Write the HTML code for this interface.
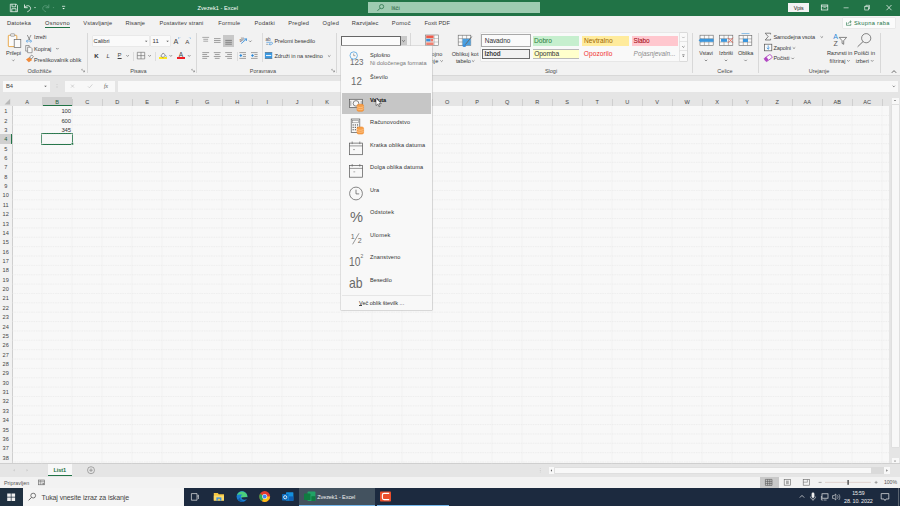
<!DOCTYPE html>
<html lang="sl"><head><meta charset="utf-8"><title>Zvezek1 - Excel</title>
<style>
html,body{margin:0;padding:0;}
body{width:900px;height:506px;overflow:hidden;position:relative;background:#f2f2f2;font-family:"Liberation Sans",sans-serif;}
.a{position:absolute;box-sizing:content-box;}
.t{white-space:nowrap;}
svg{position:absolute;left:0;top:0;}
</style></head><body>
<div class="a" style="left:0.00px;top:0.00px;width:900.00px;height:15.60px;background:#217346;"></div>
<div class="a" style="left:367.60px;top:2.20px;width:172.40px;height:11.20px;background:#9ecbb1;"></div>
<div class="a t" style="left:197.50px;top:5px;font-size:5.60px;line-height:6px;color:#fff;letter-spacing:0.044px;">Zvezek1 - Excel</div>
<div class="a t" style="left:391.20px;top:5px;font-size:5.80px;line-height:6px;color:#1f5a3a;letter-spacing:-0.050px;">Išči</div>
<div class="a" style="left:788.20px;top:3.20px;width:21.00px;height:9.00px;background:#f3f3f3;"></div>
<div class="a t" style="left:793.70px;top:5px;font-size:5.31px;line-height:6px;color:#222;letter-spacing:-0.081px;">Vpis</div>
<div class="a" style="left:0.00px;top:15.60px;width:900.00px;height:59.10px;background:#f2f2f2;"></div>
<div class="a t" style="left:7.00px;top:20px;font-size:5.70px;line-height:6px;color:#3a3a3a;letter-spacing:0.148px;">Datoteka</div>
<div class="a t" style="left:45.00px;top:20px;font-size:5.70px;line-height:6px;color:#333;letter-spacing:0.312px;">Osnovno</div>
<div class="a t" style="left:83.30px;top:20px;font-size:5.70px;line-height:6px;color:#3a3a3a;letter-spacing:0.130px;">Vstavljanje</div>
<div class="a t" style="left:125.60px;top:20px;font-size:5.70px;line-height:6px;color:#3a3a3a;letter-spacing:0.056px;">Risanje</div>
<div class="a t" style="left:159.60px;top:20px;font-size:5.70px;line-height:6px;color:#3a3a3a;letter-spacing:0.122px;">Postavitev strani</div>
<div class="a t" style="left:218.30px;top:20px;font-size:5.70px;line-height:6px;color:#3a3a3a;letter-spacing:0.185px;">Formule</div>
<div class="a t" style="left:254.60px;top:20px;font-size:5.70px;line-height:6px;color:#3a3a3a;letter-spacing:0.198px;">Podatki</div>
<div class="a t" style="left:288.20px;top:20px;font-size:5.70px;line-height:6px;color:#3a3a3a;letter-spacing:0.207px;">Pregled</div>
<div class="a t" style="left:322.60px;top:20px;font-size:5.70px;line-height:6px;color:#3a3a3a;letter-spacing:0.298px;">Ogled</div>
<div class="a t" style="left:351.80px;top:20px;font-size:5.70px;line-height:6px;color:#3a3a3a;letter-spacing:0.082px;">Razvijalec</div>
<div class="a t" style="left:391.80px;top:20px;font-size:5.70px;line-height:6px;color:#3a3a3a;letter-spacing:0.292px;">Pomoč</div>
<div class="a t" style="left:424.60px;top:20px;font-size:5.70px;line-height:6px;color:#3a3a3a;letter-spacing:0.007px;">Foxit PDF</div>
<div class="a" style="left:45.00px;top:27.10px;width:25.30px;height:1.20px;background:#217346;"></div>
<div class="a" style="left:843.00px;top:17.60px;width:51.60px;height:10.40px;background:#fbfbfb;box-shadow:0 0 0 0.4px #dcdcdc;"></div>
<div class="a t" style="left:854.00px;top:20px;font-size:5.70px;line-height:6px;color:#217346;letter-spacing:0.316px;">Skupna raba</div>
<div class="a" style="left:86.80px;top:32.50px;width:0.60px;height:40.00px;background:#d8d8d8;"></div>
<div class="a" style="left:196.20px;top:32.50px;width:0.60px;height:40.00px;background:#d8d8d8;"></div>
<div class="a" style="left:336.40px;top:32.50px;width:0.60px;height:40.00px;background:#d8d8d8;"></div>
<div class="a" style="left:409.70px;top:32.50px;width:0.60px;height:40.00px;background:#d8d8d8;"></div>
<div class="a" style="left:692.20px;top:32.50px;width:0.60px;height:40.00px;background:#d8d8d8;"></div>
<div class="a" style="left:758.40px;top:32.50px;width:0.60px;height:40.00px;background:#d8d8d8;"></div>
<div class="a" style="left:879.60px;top:32.50px;width:0.60px;height:40.00px;background:#d8d8d8;"></div>
<div class="a t" style="left:27.53px;top:68px;font-size:5.50px;line-height:6px;color:#4a4a4a;">Odložišče</div>
<div class="a t" style="left:130.15px;top:68px;font-size:5.50px;line-height:6px;color:#4a4a4a;">Pisava</div>
<div class="a t" style="left:249.85px;top:68px;font-size:5.50px;line-height:6px;color:#4a4a4a;">Poravnava</div>
<div class="a t" style="left:544.88px;top:68px;font-size:5.50px;line-height:6px;color:#4a4a4a;">Slogi</div>
<div class="a t" style="left:717.36px;top:68px;font-size:5.50px;line-height:6px;color:#4a4a4a;">Celice</div>
<div class="a t" style="left:808.76px;top:68px;font-size:5.50px;line-height:6px;color:#4a4a4a;">Urejanje</div>
<div class="a t" style="left:6.00px;top:50px;font-size:5.60px;line-height:6px;color:#3a3a3a;letter-spacing:-0.080px;">Prilepi</div>
<div class="a t" style="left:34.00px;top:34px;font-size:5.43px;line-height:6px;color:#3a3a3a;letter-spacing:-0.114px;">Izreži</div>
<div class="a t" style="left:34.00px;top:46px;font-size:5.60px;line-height:6px;color:#3a3a3a;letter-spacing:-0.033px;">Kopiraj</div>
<div class="a t" style="left:34.00px;top:57px;font-size:5.60px;line-height:6px;color:#3a3a3a;letter-spacing:-0.000px;">Preslikovalnik oblik</div>
<div class="a" style="left:92.50px;top:35.70px;width:56.70px;height:10.60px;background:#fafafa;box-shadow:0 0 0 0.4px #dcdcdc;"></div>
<div class="a" style="left:151.00px;top:35.70px;width:19.30px;height:10.60px;background:#fafafa;box-shadow:0 0 0 0.4px #dcdcdc;"></div>
<div class="a t" style="left:93.60px;top:38px;font-size:5.70px;line-height:6px;color:#333;letter-spacing:-0.022px;">Calibri</div>
<div class="a t" style="left:152.60px;top:38px;font-size:5.90px;line-height:6px;color:#333;">11</div>
<div class="a t" style="left:173.60px;top:37px;font-size:7.20px;line-height:9px;color:#444;">A</div>
<div class="a t" style="left:185.23px;top:38px;font-size:6.20px;line-height:7px;color:#444;">A</div>
<div class="a t" style="left:94.36px;top:52px;font-size:6.20px;line-height:7px;color:#333;font-weight:bold;">K</div>
<div class="a t" style="left:106.53px;top:53px;font-size:6.00px;line-height:6px;color:#444;font-style:italic;">L</div>
<div class="a t" style="left:117.60px;top:52px;font-size:6.00px;line-height:6px;color:#444;text-decoration:underline;">P</div>
<div class="a" style="left:133.20px;top:51.50px;width:0.50px;height:9.00px;background:#dcdcdc;"></div>
<div class="a" style="left:155.20px;top:51.50px;width:0.50px;height:9.00px;background:#dcdcdc;"></div>
<div class="a" style="left:159.00px;top:57.30px;width:7.60px;height:2.10px;background:#ffe81a;"></div>
<div class="a t" style="left:178.80px;top:51px;font-size:6.60px;line-height:7px;color:#444;">A</div>
<div class="a" style="left:177.20px;top:57.30px;width:7.80px;height:2.10px;background:#f01c24;"></div>
<div class="a" style="left:223.00px;top:35.00px;width:11.00px;height:11.70px;background:#c8c8c8;"></div>
<div class="a t" style="left:239.13px;top:37px;font-size:4.80px;line-height:5px;color:#555;font-style:italic;transform:rotate(-40deg);">ab</div>
<div class="a" style="left:236.80px;top:51.50px;width:0.50px;height:9.00px;background:#dcdcdc;"></div>
<div class="a" style="left:262.00px;top:33.00px;width:0.50px;height:28.50px;background:#dcdcdc;"></div>
<div class="a t" style="left:265.44px;top:37px;font-size:4.60px;line-height:5px;color:#555;">ab</div>
<div class="a t" style="left:274.40px;top:38px;font-size:5.60px;line-height:6px;color:#3a3a3a;letter-spacing:-0.050px;">Prelomi besedilo</div>
<div class="a t" style="left:274.40px;top:53px;font-size:5.60px;line-height:6px;color:#3a3a3a;letter-spacing:-0.039px;">Združi in na sredino</div>
<div class="a" style="left:341.00px;top:36.00px;width:59.80px;height:9.60px;background:#666;"></div>
<div class="a" style="left:341.70px;top:36.70px;width:58.50px;height:8.20px;background:#fbfbfb;"></div>
<div class="a" style="left:400.80px;top:36.20px;width:5.80px;height:9.20px;background:#c9c9c9;"></div>
<div class="a t" style="left:421.10px;top:51px;font-size:5.60px;line-height:6px;color:#3a3a3a;letter-spacing:0.135px;">Pogojno</div>
<div class="a t" style="left:408.60px;top:58px;font-size:5.60px;line-height:6px;color:#3a3a3a;letter-spacing:0.180px;">oblikovanje</div>
<div class="a t" style="left:451.70px;top:51px;font-size:5.60px;line-height:6px;color:#3a3a3a;letter-spacing:0.078px;">Oblikuj kot</div>
<div class="a t" style="left:455.90px;top:58px;font-size:5.60px;line-height:6px;color:#3a3a3a;letter-spacing:-0.076px;">tabelo</div>
<div class="a" style="left:480.60px;top:33.00px;width:206.00px;height:27.80px;background:#f9f9f9;box-shadow:0 0 0 0.4px #d8d8d8;"></div>
<div class="a" style="left:481.30px;top:34.30px;width:49.30px;height:12.40px;background:#a9a9a9;"></div>
<div class="a" style="left:482.00px;top:35.00px;width:47.90px;height:11.00px;background:#fafafa;"></div>
<div class="a t" style="left:484.80px;top:37px;font-size:6.50px;line-height:7px;color:#333;letter-spacing:-0.089px;">Navadno</div>
<div class="a" style="left:532.50px;top:36.00px;width:46.90px;height:9.80px;background:#c6efce;"></div>
<div class="a t" style="left:534.00px;top:37px;font-size:6.60px;line-height:7px;color:#2a7a3a;letter-spacing:0.005px;">Dobro</div>
<div class="a" style="left:581.80px;top:36.00px;width:47.10px;height:9.80px;background:#ffeb9c;"></div>
<div class="a t" style="left:584.00px;top:37px;font-size:6.60px;line-height:7px;color:#9c6500;letter-spacing:0.061px;">Nevtralno</div>
<div class="a" style="left:631.60px;top:36.00px;width:46.60px;height:9.80px;background:#ffc7ce;"></div>
<div class="a t" style="left:633.40px;top:37px;font-size:6.50px;line-height:7px;color:#9c0006;letter-spacing:-0.086px;">Slabo</div>
<div class="a" style="left:481.90px;top:49.00px;width:47.70px;height:9.70px;background:#6c6c6c;"></div>
<div class="a" style="left:482.60px;top:49.70px;width:46.30px;height:8.30px;background:#f2f2f2;"></div>
<div class="a t" style="left:484.60px;top:50px;font-size:6.31px;line-height:7px;color:#3f3f3f;letter-spacing:-0.093px;font-weight:bold;">Izhod</div>
<div class="a" style="left:532.50px;top:49.00px;width:46.70px;height:9.70px;background:#b9b9b9;"></div>
<div class="a" style="left:533.10px;top:49.60px;width:45.50px;height:8.50px;background:#ffffcc;"></div>
<div class="a t" style="left:534.20px;top:50px;font-size:6.60px;line-height:7px;color:#333;letter-spacing:-0.086px;">Opomba</div>
<div class="a t" style="left:583.80px;top:50px;font-size:6.60px;line-height:7px;color:#f03030;letter-spacing:0.050px;">Opozorilo</div>
<div class="a t" style="left:633.60px;top:50px;font-size:6.40px;line-height:7px;color:#8a8a8a;letter-spacing:0.025px;font-style:italic;">Pojasnjevaln...</div>
<div class="a" style="left:680.20px;top:33.00px;width:6.40px;height:9.20px;background:#f9f9f9;box-shadow:0 0 0 0.4px #c8c8c8;"></div>
<div class="a" style="left:680.20px;top:42.20px;width:6.40px;height:9.10px;background:#f9f9f9;box-shadow:0 0 0 0.4px #c8c8c8;"></div>
<div class="a" style="left:680.20px;top:51.30px;width:6.40px;height:9.50px;background:#f9f9f9;box-shadow:0 0 0 0.4px #c8c8c8;"></div>
<div class="a t" style="left:699.20px;top:50px;font-size:5.19px;line-height:6px;color:#3a3a3a;letter-spacing:-0.090px;">Vstavi</div>
<div class="a t" style="left:719.10px;top:50px;font-size:5.60px;line-height:6px;color:#3a3a3a;letter-spacing:-0.118px;">Izbriši</div>
<div class="a t" style="left:737.90px;top:50px;font-size:5.60px;line-height:6px;color:#3a3a3a;letter-spacing:-0.079px;">Oblika</div>
<div class="a t" style="left:773.40px;top:34px;font-size:5.60px;line-height:6px;color:#3a3a3a;letter-spacing:-0.112px;">Samodejna vsota</div>
<div class="a t" style="left:773.40px;top:45px;font-size:5.60px;line-height:6px;color:#3a3a3a;letter-spacing:-0.110px;">Zapolni</div>
<div class="a t" style="left:773.40px;top:55px;font-size:5.60px;line-height:6px;color:#3a3a3a;letter-spacing:-0.071px;">Počisti</div>
<div class="a t" style="left:833.27px;top:33px;font-size:7.00px;line-height:7px;color:#2b88d8;">A</div>
<div class="a t" style="left:833.46px;top:40px;font-size:7.00px;line-height:7px;color:#555;">Z</div>
<div class="a t" style="left:826.90px;top:50px;font-size:5.60px;line-height:6px;color:#3a3a3a;letter-spacing:-0.067px;">Razvrsti in</div>
<div class="a t" style="left:829.40px;top:58px;font-size:5.60px;line-height:6px;color:#3a3a3a;letter-spacing:0.163px;">filtriraj</div>
<div class="a t" style="left:854.10px;top:50px;font-size:5.60px;line-height:6px;color:#3a3a3a;letter-spacing:0.016px;">Poišči in</div>
<div class="a t" style="left:855.70px;top:58px;font-size:5.60px;line-height:6px;color:#3a3a3a;letter-spacing:0.003px;">izberi</div>
<div class="a" style="left:0.00px;top:74.70px;width:900.00px;height:31.50px;background:#e5e5e5;"></div>
<div class="a" style="left:0.00px;top:74.90px;width:900.00px;height:0.80px;background:#d8d8d8;"></div>
<div class="a" style="left:2.50px;top:80.60px;width:47.50px;height:11.40px;background:#f8f8f8;"></div>
<div class="a t" style="left:6.00px;top:83px;font-size:5.80px;line-height:6px;color:#444;">B4</div>
<div class="a" style="left:64.60px;top:80.60px;width:50.00px;height:11.40px;background:#f8f8f8;"></div>
<div class="a t" style="left:104.02px;top:83px;font-size:5.60px;line-height:6px;color:#555;font-style:italic;font-family:'Liberation Serif',serif;">fx</div>
<div class="a" style="left:117.60px;top:80.60px;width:780.40px;height:11.40px;background:#f8f8f8;"></div>
<div class="a" style="left:11.90px;top:106.15px;width:877.50px;height:357.35px;background:#f8f8f8;"></div>
<div class="a" style="left:41.80px;top:97.20px;width:30.20px;height:9.00px;background:#d0d0d0;"></div>
<div class="a" style="left:41.80px;top:105.40px;width:30.20px;height:0.90px;background:#217346;"></div>
<div class="a" style="left:0.00px;top:134.25px;width:11.90px;height:9.37px;background:#d0d0d0;"></div>
<div class="a" style="left:11.00px;top:134.25px;width:0.90px;height:9.37px;background:#217346;"></div>
<div class="a t" style="left:25.33px;top:99px;font-size:5.60px;line-height:6px;color:#444;">A</div>
<div class="a" style="left:41.65px;top:98.50px;width:0.50px;height:7.50px;background:#cfcfcf;"></div>
<div class="a t" style="left:55.33px;top:99px;font-size:5.60px;line-height:6px;color:#1e5c3a;">B</div>
<div class="a" style="left:71.65px;top:98.50px;width:0.50px;height:7.50px;background:#cfcfcf;"></div>
<div class="a t" style="left:85.18px;top:99px;font-size:5.60px;line-height:6px;color:#444;">C</div>
<div class="a" style="left:101.65px;top:98.50px;width:0.50px;height:7.50px;background:#cfcfcf;"></div>
<div class="a t" style="left:115.18px;top:99px;font-size:5.60px;line-height:6px;color:#444;">D</div>
<div class="a" style="left:131.65px;top:98.50px;width:0.50px;height:7.50px;background:#cfcfcf;"></div>
<div class="a t" style="left:145.33px;top:99px;font-size:5.60px;line-height:6px;color:#444;">E</div>
<div class="a" style="left:161.65px;top:98.50px;width:0.50px;height:7.50px;background:#cfcfcf;"></div>
<div class="a t" style="left:175.49px;top:99px;font-size:5.60px;line-height:6px;color:#444;">F</div>
<div class="a" style="left:191.65px;top:98.50px;width:0.50px;height:7.50px;background:#cfcfcf;"></div>
<div class="a t" style="left:205.02px;top:99px;font-size:5.60px;line-height:6px;color:#444;">G</div>
<div class="a" style="left:221.65px;top:98.50px;width:0.50px;height:7.50px;background:#cfcfcf;"></div>
<div class="a t" style="left:235.18px;top:99px;font-size:5.60px;line-height:6px;color:#444;">H</div>
<div class="a" style="left:251.65px;top:98.50px;width:0.50px;height:7.50px;background:#cfcfcf;"></div>
<div class="a t" style="left:266.42px;top:99px;font-size:5.60px;line-height:6px;color:#444;">I</div>
<div class="a" style="left:281.65px;top:98.50px;width:0.50px;height:7.50px;background:#cfcfcf;"></div>
<div class="a t" style="left:295.80px;top:99px;font-size:5.60px;line-height:6px;color:#444;">J</div>
<div class="a" style="left:311.65px;top:98.50px;width:0.50px;height:7.50px;background:#cfcfcf;"></div>
<div class="a t" style="left:325.33px;top:99px;font-size:5.60px;line-height:6px;color:#444;">K</div>
<div class="a" style="left:341.65px;top:98.50px;width:0.50px;height:7.50px;background:#cfcfcf;"></div>
<div class="a t" style="left:355.64px;top:99px;font-size:5.60px;line-height:6px;color:#444;">L</div>
<div class="a" style="left:371.65px;top:98.50px;width:0.50px;height:7.50px;background:#cfcfcf;"></div>
<div class="a t" style="left:384.87px;top:99px;font-size:5.60px;line-height:6px;color:#444;">M</div>
<div class="a" style="left:401.65px;top:98.50px;width:0.50px;height:7.50px;background:#cfcfcf;"></div>
<div class="a t" style="left:415.18px;top:99px;font-size:5.60px;line-height:6px;color:#444;">N</div>
<div class="a" style="left:431.65px;top:98.50px;width:0.50px;height:7.50px;background:#cfcfcf;"></div>
<div class="a t" style="left:445.02px;top:99px;font-size:5.60px;line-height:6px;color:#444;">O</div>
<div class="a" style="left:461.65px;top:98.50px;width:0.50px;height:7.50px;background:#cfcfcf;"></div>
<div class="a t" style="left:475.33px;top:99px;font-size:5.60px;line-height:6px;color:#444;">P</div>
<div class="a" style="left:491.65px;top:98.50px;width:0.50px;height:7.50px;background:#cfcfcf;"></div>
<div class="a t" style="left:505.02px;top:99px;font-size:5.60px;line-height:6px;color:#444;">Q</div>
<div class="a" style="left:521.65px;top:98.50px;width:0.50px;height:7.50px;background:#cfcfcf;"></div>
<div class="a t" style="left:535.18px;top:99px;font-size:5.60px;line-height:6px;color:#444;">R</div>
<div class="a" style="left:551.65px;top:98.50px;width:0.50px;height:7.50px;background:#cfcfcf;"></div>
<div class="a t" style="left:565.33px;top:99px;font-size:5.60px;line-height:6px;color:#444;">S</div>
<div class="a" style="left:581.65px;top:98.50px;width:0.50px;height:7.50px;background:#cfcfcf;"></div>
<div class="a t" style="left:595.49px;top:99px;font-size:5.60px;line-height:6px;color:#444;">T</div>
<div class="a" style="left:611.65px;top:98.50px;width:0.50px;height:7.50px;background:#cfcfcf;"></div>
<div class="a t" style="left:625.18px;top:99px;font-size:5.60px;line-height:6px;color:#444;">U</div>
<div class="a" style="left:641.65px;top:98.50px;width:0.50px;height:7.50px;background:#cfcfcf;"></div>
<div class="a t" style="left:655.33px;top:99px;font-size:5.60px;line-height:6px;color:#444;">V</div>
<div class="a" style="left:671.65px;top:98.50px;width:0.50px;height:7.50px;background:#cfcfcf;"></div>
<div class="a t" style="left:684.56px;top:99px;font-size:5.60px;line-height:6px;color:#444;">W</div>
<div class="a" style="left:701.65px;top:98.50px;width:0.50px;height:7.50px;background:#cfcfcf;"></div>
<div class="a t" style="left:715.33px;top:99px;font-size:5.60px;line-height:6px;color:#444;">X</div>
<div class="a" style="left:731.65px;top:98.50px;width:0.50px;height:7.50px;background:#cfcfcf;"></div>
<div class="a t" style="left:745.33px;top:99px;font-size:5.60px;line-height:6px;color:#444;">Y</div>
<div class="a" style="left:761.65px;top:98.50px;width:0.50px;height:7.50px;background:#cfcfcf;"></div>
<div class="a t" style="left:775.49px;top:99px;font-size:5.60px;line-height:6px;color:#444;">Z</div>
<div class="a" style="left:791.65px;top:98.50px;width:0.50px;height:7.50px;background:#cfcfcf;"></div>
<div class="a t" style="left:803.46px;top:99px;font-size:5.60px;line-height:6px;color:#444;">AA</div>
<div class="a" style="left:821.65px;top:98.50px;width:0.50px;height:7.50px;background:#cfcfcf;"></div>
<div class="a t" style="left:833.46px;top:99px;font-size:5.60px;line-height:6px;color:#444;">AB</div>
<div class="a" style="left:851.65px;top:98.50px;width:0.50px;height:7.50px;background:#cfcfcf;"></div>
<div class="a t" style="left:863.31px;top:99px;font-size:5.60px;line-height:6px;color:#444;">AC</div>
<div class="a" style="left:881.65px;top:98.50px;width:0.50px;height:7.50px;background:#cfcfcf;"></div>
<div class="a t" style="left:4.14px;top:108px;font-size:5.60px;line-height:6px;color:#444;">1</div>
<div class="a t" style="left:4.14px;top:118px;font-size:5.60px;line-height:6px;color:#444;">2</div>
<div class="a t" style="left:4.14px;top:127px;font-size:5.60px;line-height:6px;color:#444;">3</div>
<div class="a t" style="left:4.14px;top:136px;font-size:5.60px;line-height:6px;color:#1e5c3a;">4</div>
<div class="a t" style="left:4.14px;top:146px;font-size:5.60px;line-height:6px;color:#444;">5</div>
<div class="a t" style="left:4.14px;top:155px;font-size:5.60px;line-height:6px;color:#444;">6</div>
<div class="a t" style="left:4.14px;top:164px;font-size:5.60px;line-height:6px;color:#444;">7</div>
<div class="a t" style="left:4.14px;top:174px;font-size:5.60px;line-height:6px;color:#444;">8</div>
<div class="a t" style="left:4.14px;top:183px;font-size:5.60px;line-height:6px;color:#444;">9</div>
<div class="a t" style="left:2.59px;top:192px;font-size:5.60px;line-height:6px;color:#444;">10</div>
<div class="a t" style="left:2.79px;top:202px;font-size:5.60px;line-height:6px;color:#444;">11</div>
<div class="a t" style="left:2.59px;top:211px;font-size:5.60px;line-height:6px;color:#444;">12</div>
<div class="a t" style="left:2.59px;top:221px;font-size:5.60px;line-height:6px;color:#444;">13</div>
<div class="a t" style="left:2.59px;top:230px;font-size:5.60px;line-height:6px;color:#444;">14</div>
<div class="a t" style="left:2.59px;top:239px;font-size:5.60px;line-height:6px;color:#444;">15</div>
<div class="a t" style="left:2.59px;top:249px;font-size:5.60px;line-height:6px;color:#444;">16</div>
<div class="a t" style="left:2.59px;top:258px;font-size:5.60px;line-height:6px;color:#444;">17</div>
<div class="a t" style="left:2.59px;top:267px;font-size:5.60px;line-height:6px;color:#444;">18</div>
<div class="a t" style="left:2.59px;top:277px;font-size:5.60px;line-height:6px;color:#444;">19</div>
<div class="a t" style="left:2.59px;top:286px;font-size:5.60px;line-height:6px;color:#444;">20</div>
<div class="a t" style="left:2.59px;top:295px;font-size:5.60px;line-height:6px;color:#444;">21</div>
<div class="a t" style="left:2.59px;top:305px;font-size:5.60px;line-height:6px;color:#444;">22</div>
<div class="a t" style="left:2.59px;top:314px;font-size:5.60px;line-height:6px;color:#444;">23</div>
<div class="a t" style="left:2.59px;top:324px;font-size:5.60px;line-height:6px;color:#444;">24</div>
<div class="a t" style="left:2.59px;top:333px;font-size:5.60px;line-height:6px;color:#444;">25</div>
<div class="a t" style="left:2.59px;top:342px;font-size:5.60px;line-height:6px;color:#444;">26</div>
<div class="a t" style="left:2.59px;top:352px;font-size:5.60px;line-height:6px;color:#444;">27</div>
<div class="a t" style="left:2.59px;top:361px;font-size:5.60px;line-height:6px;color:#444;">28</div>
<div class="a t" style="left:2.59px;top:370px;font-size:5.60px;line-height:6px;color:#444;">29</div>
<div class="a t" style="left:2.59px;top:380px;font-size:5.60px;line-height:6px;color:#444;">30</div>
<div class="a t" style="left:2.59px;top:389px;font-size:5.60px;line-height:6px;color:#444;">31</div>
<div class="a t" style="left:2.59px;top:398px;font-size:5.60px;line-height:6px;color:#444;">32</div>
<div class="a t" style="left:2.59px;top:408px;font-size:5.60px;line-height:6px;color:#444;">33</div>
<div class="a t" style="left:2.59px;top:417px;font-size:5.60px;line-height:6px;color:#444;">34</div>
<div class="a t" style="left:2.59px;top:427px;font-size:5.60px;line-height:6px;color:#444;">35</div>
<div class="a t" style="left:2.59px;top:436px;font-size:5.60px;line-height:6px;color:#444;">36</div>
<div class="a t" style="left:2.59px;top:445px;font-size:5.60px;line-height:6px;color:#444;">37</div>
<div class="a t" style="left:2.59px;top:455px;font-size:5.60px;line-height:6px;color:#444;">38</div>
<div class="a" style="left:11.60px;top:106.15px;width:0.50px;height:357.35px;background:#cfcfcf;"></div>
<div class="a t" style="left:61.40px;top:108px;font-size:5.91px;line-height:6px;color:#333;letter-spacing:-0.087px;">100</div>
<div class="a t" style="left:61.40px;top:118px;font-size:5.91px;line-height:6px;color:#333;letter-spacing:-0.087px;">600</div>
<div class="a t" style="left:61.40px;top:127px;font-size:5.91px;line-height:6px;color:#333;letter-spacing:-0.087px;">345</div>
<div class="a" style="left:41.2px;top:133.44px;width:29.90px;height:9.17px;border:0.8px solid #217346;"></div>
<div class="a" style="left:889.40px;top:96.50px;width:10.60px;height:368.50px;background:#e5e5e5;"></div>
<div class="a" style="left:891.60px;top:98.30px;width:7.00px;height:5.70px;background:#f8f8f8;"></div>
<div class="a" style="left:891.60px;top:105.00px;width:7.00px;height:341.70px;background:#f8f8f8;box-shadow:0 0 0 0.3px #d0d0d0;"></div>
<div class="a" style="left:891.60px;top:458.00px;width:7.00px;height:6.00px;background:#f8f8f8;"></div>
<div class="a" style="left:0.00px;top:463.50px;width:900.00px;height:13.50px;background:#e5e5e5;"></div>
<div class="a" style="left:0.00px;top:463.30px;width:900.00px;height:0.50px;background:#cfcfcf;"></div>
<div class="a" style="left:47.50px;top:463.50px;width:24.50px;height:12.50px;background:#f8f8f8;"></div>
<div class="a" style="left:47.50px;top:475.00px;width:24.50px;height:1.20px;background:#217346;"></div>
<div class="a t" style="left:53.40px;top:467px;font-size:5.63px;line-height:6px;color:#217346;letter-spacing:-0.107px;font-weight:bold;">List1</div>
<div class="a" style="left:548.60px;top:467.40px;width:5.40px;height:6.20px;background:#f8f8f8;"></div>
<div class="a" style="left:555.20px;top:467.80px;width:316.20px;height:5.40px;background:#f8f8f8;box-shadow:0 0 0 0.3px #cfcfcf;"></div>
<div class="a" style="left:871.40px;top:467.40px;width:12.20px;height:6.20px;background:#dadada;"></div>
<div class="a" style="left:884.00px;top:467.40px;width:6.40px;height:6.20px;background:#f8f8f8;"></div>
<div class="a" style="left:0.00px;top:477.00px;width:900.00px;height:10.60px;background:#f2f2f2;"></div>
<div class="a t" style="left:4.00px;top:480px;font-size:5.40px;line-height:6px;color:#555;letter-spacing:-0.028px;">Pripravljen</div>
<div class="a" style="left:759.80px;top:477.30px;width:18.80px;height:10.30px;background:#c9c9c9;"></div>
<div class="a t" style="left:884.00px;top:479px;font-size:5.20px;line-height:6px;color:#555;letter-spacing:-0.075px;">100%</div>
<div class="a" style="left:0.00px;top:487.60px;width:900.00px;height:18.40px;background:#1c2a3f;"></div>
<div class="a" style="left:0.00px;top:487.60px;width:22.60px;height:18.40px;background:#1f3040;"></div>
<div class="a" style="left:23.00px;top:487.80px;width:161.00px;height:18.20px;background:#f4f4f4;"></div>
<div class="a t" style="left:41.50px;top:494px;font-size:7.00px;line-height:7px;color:#444;letter-spacing:-0.109px;">Tukaj vnesite izraz za iskanje</div>
<div class="a" style="left:299.40px;top:487.60px;width:75.30px;height:18.40px;background:#43525f;"></div>
<div class="a" style="left:299.40px;top:504.60px;width:75.30px;height:1.40px;background:#76b9ed;"></div>
<div class="a t" style="left:305.92px;top:494px;font-size:4.60px;line-height:5px;color:#fff;font-weight:bold;">x</div>
<div class="a t" style="left:317.20px;top:494px;font-size:5.52px;line-height:6px;color:#f0f0f0;letter-spacing:-0.083px;">Zvezek1 - Excel</div>
<div class="a" style="left:377.00px;top:504.70px;width:71.60px;height:1.30px;background:#76b9ed;"></div>
<div class="a t" style="left:852.20px;top:490px;font-size:5.16px;line-height:6px;color:#f0f0f0;letter-spacing:-0.103px;">15:59</div>
<div class="a t" style="left:844.10px;top:498px;font-size:5.40px;line-height:6px;color:#f0f0f0;letter-spacing:-0.119px;">28. 10. 2022</div>
<div class="a" style="left:897.80px;top:487.60px;width:0.40px;height:18.40px;background:#5a6470;"></div>
<div class="a" style="left:341px;top:46.4px;width:90.69999999999999px;height:264.0px;background:#f8f8f8;box-shadow:0 0 0 0.5px #c6c6c6, 0.8px 0.8px 1.5px rgba(0,0,0,0.18);z-index:5;"></div>
<div class="a" style="left:342.00px;top:92.90px;width:88.80px;height:21.60px;background:#c6c6c6;z-index:5;"></div>
<div class="a t" style="left:370.00px;top:52px;font-size:5.60px;line-height:6px;color:#333;letter-spacing:-0.005px;z-index:6;">Splošno</div>
<div class="a t" style="left:370.00px;top:74px;font-size:5.60px;line-height:6px;color:#333;letter-spacing:0.199px;z-index:6;">Število</div>
<div class="a t" style="left:370.00px;top:97px;font-size:5.60px;line-height:6px;color:#111;letter-spacing:-0.050px;font-weight:bold;z-index:6;">Valuta</div>
<div class="a t" style="left:370.00px;top:119px;font-size:5.60px;line-height:6px;color:#333;letter-spacing:0.123px;z-index:6;">Računovodstvo</div>
<div class="a t" style="left:370.00px;top:142px;font-size:5.60px;line-height:6px;color:#333;letter-spacing:0.140px;z-index:6;">Kratka oblika datuma</div>
<div class="a t" style="left:370.00px;top:164px;font-size:5.60px;line-height:6px;color:#333;letter-spacing:0.113px;z-index:6;">Dolga oblika datuma</div>
<div class="a t" style="left:370.00px;top:187px;font-size:5.60px;line-height:6px;color:#333;letter-spacing:0.059px;z-index:6;">Ura</div>
<div class="a t" style="left:370.00px;top:209px;font-size:5.60px;line-height:6px;color:#333;letter-spacing:0.224px;z-index:6;">Odstotek</div>
<div class="a t" style="left:370.00px;top:232px;font-size:5.60px;line-height:6px;color:#333;letter-spacing:0.270px;z-index:6;">Ulomek</div>
<div class="a t" style="left:370.00px;top:254px;font-size:5.60px;line-height:6px;color:#333;letter-spacing:0.134px;z-index:6;">Znanstveno</div>
<div class="a t" style="left:370.00px;top:277px;font-size:5.60px;line-height:6px;color:#333;letter-spacing:0.040px;z-index:6;">Besedilo</div>
<div class="a t" style="left:370.00px;top:60px;font-size:5.60px;line-height:6px;color:#777;letter-spacing:0.012px;z-index:6;">Ni določenega formata</div>
<div class="a" style="left:342px;top:295.3px;width:88.8px;height:0.4px;background:#e6e6e6;z-index:6;"></div>
<div class="a t" style="left:359.00px;top:300px;font-size:5.60px;line-height:6px;color:#333;letter-spacing:-0.026px;z-index:6;">Več oblik številk ...</div>
<div class="a" style="left:359.00px;top:305.20px;width:3.20px;height:0.40px;background:#444;z-index:6;"></div>
<div class="a t" style="left:349.90px;top:58px;font-size:8.20px;line-height:9px;color:#6a6a6a;z-index:6;transform:scaleX(0.9794);transform-origin:0 0;">123</div>
<div class="a t" style="left:350.80px;top:74px;font-size:11.80px;line-height:14px;color:#6a6a6a;z-index:6;transform:scaleX(0.8228);transform-origin:0 0;">12</div>
<div class="a t" style="left:349.70px;top:208px;font-size:15.50px;line-height:17px;color:#6a6a6a;z-index:6;transform:scaleX(0.9433);transform-origin:0 0;">%</div>
<div class="a t" style="left:350.65px;top:233px;font-size:7.00px;line-height:7px;color:#6a6a6a;z-index:6;">1</div>
<div class="a t" style="left:357.65px;top:237px;font-size:7.00px;line-height:7px;color:#6a6a6a;z-index:6;">2</div>
<div class="a t" style="left:348.90px;top:255px;font-size:12.60px;line-height:14px;color:#6a6a6a;z-index:6;transform:scaleX(0.8134);transform-origin:0 0;">10</div>
<div class="a t" style="left:360.41px;top:253px;font-size:5.00px;line-height:6px;color:#6a6a6a;z-index:6;">2</div>
<div class="a t" style="left:349.00px;top:275px;font-size:14.20px;line-height:16px;color:#6a6a6a;z-index:6;transform:scaleX(0.8610);transform-origin:0 0;">ab</div>
<svg width="900" height="506" viewBox="0 0 900 506" style="z-index:2"><path d="M10.3 4.2h6l1.2 1.2v6.3h-7.2z M12 4.2v2.6h3.6v-2.6 M11.8 11.7v-3h4.2v3" fill="none" stroke="#fff" stroke-width="0.7"/>
<path d="M24.5 4.5v3.2h3.2 M24.7 7.5c1.5-2.2 4.5-2.4 5.6-0.3c1 2-0.8 3.6-3 4.6" fill="none" stroke="#fff" stroke-width="0.8"/>
<path d="M34.00 7.30 L36.00 7.30 L35.00 8.30 Z" fill="#fff"/>
<path d="M48.8 4.5v3.2h-3.2 M48.6 7.5c-1.5-2.2-4.5-2.4-5.6-0.3c-1 2 0.8 3.6 3 4.6" fill="none" stroke="#5f9f7f" stroke-width="0.8"/>
<path d="M52.60 7.35 L54.40 7.35 L53.50 8.25 Z" fill="#5f9f7f"/>
<path d="M62 6.3h3.2" stroke="#fff" stroke-width="0.7"/>
<path d="M62.30 7.95 L64.90 7.95 L63.60 9.25 Z" fill="#fff"/>
<circle cx="381.6" cy="6.6" r="2.1" fill="none" stroke="#1f6b42" stroke-width="0.7"/><path d="M380.1 8.2l-2.6 2.6" stroke="#1f6b42" stroke-width="0.8"/>
<rect x="821.3" y="5" width="6.5" height="5" fill="none" stroke="#fff" stroke-width="0.7"/><path d="M823.3 8.3l1.3-1.4l1.3 1.4 M821.3 6.3h6.5" fill="none" stroke="#fff" stroke-width="0.6"/>
<path d="M843.6 7.8h5" stroke="#fff" stroke-width="0.6"/>
<rect x="864.8" y="6.4" width="3.6" height="3.6" fill="none" stroke="#fff" stroke-width="0.6"/><path d="M865.9 6.4v-1.1h3.6v3.6h-1.1" fill="none" stroke="#fff" stroke-width="0.6"/>
<path d="M886.5 5l5 5.2 M891.5 5l-5 5.2" stroke="#fff" stroke-width="0.7"/>
<path d="M846.5 22.3v3h4.3v-1.6 M848 24c0.3-1.6 1.4-2.3 3-2.3 M850 20.5l1.3 1.2l-1.3 1.2" fill="none" stroke="#217346" stroke-width="0.6"/>
<path d="M81.7 70.3v-1h1 M83.1 71.8h1.4v-1.4 M82.39999999999999 69.9l2 2" fill="none" stroke="#666" stroke-width="0.5"/>
<path d="M191.70000000000002 70.3v-1h1 M193.10000000000002 71.8h1.4v-1.4 M192.4 69.9l2 2" fill="none" stroke="#666" stroke-width="0.5"/>
<path d="M331.7 70.3v-1h1 M333.1 71.8h1.4v-1.4 M332.40000000000003 69.9l2 2" fill="none" stroke="#666" stroke-width="0.5"/>
<rect x="8.3" y="35.3" width="8.5" height="11.3" rx="0.6" fill="#fbfbfb" stroke="#e8a33d" stroke-width="0.9"/><rect x="10.6" y="33.8" width="4" height="2.4" rx="0.5" fill="#f3f3f3" stroke="#777" stroke-width="0.6"/><rect x="14.2" y="39.6" width="6.6" height="8" fill="#fbfbfb" stroke="#666" stroke-width="0.7"/>
<path d="M12.30 59.75 L13.40 60.85 L14.50 59.75" fill="none" stroke="#666" stroke-width="0.7"/>
<path d="M27.3 35l2.6 5.3 M31 35l-2.6 5.3" stroke="#555" stroke-width="0.6" fill="none"/><circle cx="27.3" cy="41.2" r="0.9" fill="none" stroke="#2b88d8" stroke-width="0.6"/><circle cx="30.6" cy="41.2" r="0.9" fill="none" stroke="#2b88d8" stroke-width="0.6"/>
<path d="M25.7 45.5h3.5v5.6h-3.5z" fill="none" stroke="#666" stroke-width="0.6"/><path d="M27.6 47.2h3l1.5 1.5v4h-4.5z" fill="#f8f8f8" stroke="#666" stroke-width="0.6"/>
<path d="M56.15 47.98 L57.40 49.23 L58.65 47.98" fill="none" stroke="#666" stroke-width="0.7"/>
<path d="M26 59.5l3.2-2.2l3 2.6l-3.4 2.4z" fill="#f08a3a"/><path d="M29.5 57l2.3-2l1.6 1.7l-2 2.2z" fill="none" stroke="#555" stroke-width="0.6"/>
<path d="M144.90 40.65 L147.50 40.65 L146.20 41.95 Z" fill="#555"/>
<path d="M166.30 40.65 L168.90 40.65 L167.60 41.95 Z" fill="#555"/>
<path d="M178.20 37.60 L179.00 38.40 L179.80 37.60" fill="none" stroke="#2b88d8" stroke-width="0.7"/>
<path d="M189.4 37.6l0.8 0.8l0.8-0.8" fill="none" stroke="#2b88d8" stroke-width="0.5"/>
<path d="M126.35 55.17 L127.60 56.42 L128.85 55.17" fill="none" stroke="#666" stroke-width="0.7"/>
<path d="M137.3 52.3h7.4v6.6h-7.4z M141 52.3v6.6 M137.3 55.6h7.4" fill="none" stroke="#666" stroke-width="0.6"/>
<path d="M148.35 55.17 L149.60 56.42 L150.85 55.17" fill="none" stroke="#666" stroke-width="0.7"/>
<path d="M160.8 56.2l2.2-3.2l2.4 2l-2.2 2.6z" fill="#f8f8f8" stroke="#555" stroke-width="0.6"/><path d="M165.6 55.3c0.8 0.8 0.8 1.6 0.3 2" fill="none" stroke="#2b88d8" stroke-width="0.6"/>
<path d="M169.55 55.17 L170.80 56.42 L172.05 55.17" fill="none" stroke="#666" stroke-width="0.7"/>
<path d="M187.95 55.17 L189.20 56.42 L190.45 55.17" fill="none" stroke="#666" stroke-width="0.7"/>
<path d="M202.30 37.40h6.80" stroke="#777" stroke-width="0.6"/>
<path d="M203.30 39.30h4.80" stroke="#777" stroke-width="0.6"/>
<path d="M203.30 41.20h4.80" stroke="#777" stroke-width="0.6"/>
<path d="M214.00 38.60h6.60" stroke="#666" stroke-width="0.6"/>
<path d="M214.00 40.50h6.60" stroke="#666" stroke-width="0.6"/>
<path d="M214.00 42.40h6.60" stroke="#666" stroke-width="0.6"/>
<path d="M225.30 40.40h6.60" stroke="#555" stroke-width="0.6"/>
<path d="M225.30 42.30h6.60" stroke="#555" stroke-width="0.6"/>
<path d="M225.30 44.20h6.60" stroke="#555" stroke-width="0.6"/>
<path d="M241.2 43.6l5.2-4.6 M246.6 38.8l-2.2 0.2 M246.6 38.8l-0.2 2.2" stroke="#2b88d8" stroke-width="0.8" fill="none"/>
<path d="M249.05 40.58 L250.30 41.83 L251.55 40.58" fill="none" stroke="#666" stroke-width="0.7"/>
<path d="M202.30 52.60h6.80" stroke="#666" stroke-width="0.6"/>
<path d="M202.30 54.53h4.80" stroke="#666" stroke-width="0.6"/>
<path d="M202.30 56.46h6.80" stroke="#666" stroke-width="0.6"/>
<path d="M202.30 58.39h4.80" stroke="#666" stroke-width="0.6"/>
<path d="M213.80 52.60h6.80" stroke="#666" stroke-width="0.6"/>
<path d="M214.80 54.53h4.80" stroke="#666" stroke-width="0.6"/>
<path d="M213.80 56.46h6.80" stroke="#666" stroke-width="0.6"/>
<path d="M214.80 58.39h4.80" stroke="#666" stroke-width="0.6"/>
<path d="M225.20 52.60h6.80" stroke="#666" stroke-width="0.6"/>
<path d="M227.20 54.53h4.80" stroke="#666" stroke-width="0.6"/>
<path d="M225.20 56.46h6.80" stroke="#666" stroke-width="0.6"/>
<path d="M227.20 58.39h4.80" stroke="#666" stroke-width="0.6"/>
<path d="M239.40 52.60h6.60" stroke="#666" stroke-width="0.6"/>
<path d="M242.80 54.53h3.20" stroke="#666" stroke-width="0.6"/>
<path d="M242.80 56.46h3.20" stroke="#666" stroke-width="0.6"/>
<path d="M239.40 58.39h6.60" stroke="#666" stroke-width="0.6"/>
<path d="M239.3 55.5l1.5-1.5l1.5 1.5l-1.5 1.5z" fill="#2b88d8"/>
<path d="M251.00 52.60h6.60" stroke="#666" stroke-width="0.6"/>
<path d="M254.40 54.53h3.20" stroke="#666" stroke-width="0.6"/>
<path d="M254.40 56.46h3.20" stroke="#666" stroke-width="0.6"/>
<path d="M251.00 58.39h6.60" stroke="#666" stroke-width="0.6"/>
<path d="M251 55.5l1.5-1.5l1.5 1.5l-1.5 1.5z" fill="#2b88d8"/>
<path d="M266.3 42.3h5.3c1.2 0 1.2 2 0 2h-2.5 M270 43.3l-1 1l1 1" fill="none" stroke="#2b88d8" stroke-width="0.6"/><path d="M266.3 44.3h1.5" stroke="#555" stroke-width="0.6"/>
<rect x="264.9" y="52.3" width="7.3" height="6.4" fill="#3a96dd"/><path d="M264.9 52.5h7.3 M264.9 58.5h7.3" stroke="#5a6a78" stroke-width="0.6"/><path d="M266 55.5h5.2" stroke="#e8f2fb" stroke-width="1.1"/>
<path d="M327.95 55.38 L329.20 56.62 L330.45 55.38" fill="none" stroke="#666" stroke-width="0.7"/>
<path d="M402.25 40.38 L403.50 41.62 L404.75 40.38" fill="none" stroke="#444" stroke-width="0.7"/>
<rect x="425.6" y="35" width="13" height="10.5" fill="#fafafa" stroke="#777" stroke-width="0.6"/><path d="M434.2 35v10.5 M425.6 38.5h13 M425.6 42h13" stroke="#888" stroke-width="0.4"/><rect x="426.2" y="35.5" width="7.4" height="2.6" fill="#ee5a4a"/><rect x="426.2" y="39" width="4.4" height="2.4" fill="#3a8fdc"/><rect x="430.6" y="39" width="2.6" height="2.4" fill="#ee7a6a"/><rect x="426.2" y="42.5" width="7.4" height="2.6" fill="#f08070"/>
<path d="M440.35 60.38 L441.60 61.62 L442.85 60.38" fill="none" stroke="#666" stroke-width="0.7"/>
<rect x="458.2" y="35.2" width="12.6" height="10.3" fill="#fafafa" stroke="#666" stroke-width="0.6"/><path d="M462.4 35.2v10.3 M466.6 35.2v10.3 M458.2 38.6h12.6 M458.2 42h12.6" stroke="#777" stroke-width="0.5"/><rect x="462.6" y="38.8" width="8" height="6.5" fill="#4a9fe0"/><path d="M471.8 36.5l-6.5 8.2" stroke="#666" stroke-width="0.9"/><ellipse cx="464.3" cy="45.8" rx="1.8" ry="1.2" fill="#3a8fdc"/>
<path d="M471.95 60.38 L473.20 61.62 L474.45 60.38" fill="none" stroke="#666" stroke-width="0.7"/>
<path d="M682.15 36.77 L683.40 38.02 L684.65 36.77" fill="none" stroke="#bbb" stroke-width="0.7"/>
<path d="M682.4 38l1-1l1 1" stroke="#bbb" fill="none" stroke-width="0.6"/>
<path d="M682.30 46.25 L683.40 47.35 L684.50 46.25" fill="none" stroke="#555" stroke-width="0.7"/>
<path d="M682.2 54.6h2.4" stroke="#555" stroke-width="0.5"/>
<path d="M682.30 55.85 L684.50 55.85 L683.40 56.95 Z" fill="#555"/>
<rect x="700" y="35.2" width="13.2" height="10.2" fill="#fafafa" stroke="#666" stroke-width="0.6"/><path d="M704.40 35.2v10.2 M708.80 35.2v10.2 M700 38.60h13.2 M700 42.00h13.2" stroke="#777" stroke-width="0.5"/>
<rect x="701" y="38.8" width="12.6" height="3" fill="#3a96dd"/><path d="M698.6 40.3l2.6-2.4v4.8z" fill="#3a96dd"/>
<path d="M704.75 59.77 L706.00 61.02 L707.25 59.77" fill="none" stroke="#666" stroke-width="0.7"/>
<rect x="719.6" y="35.2" width="13.2" height="10.2" fill="#fafafa" stroke="#666" stroke-width="0.6"/><path d="M724.00 35.2v10.2 M728.40 35.2v10.2 M719.6 38.60h13.2 M719.6 42.00h13.2" stroke="#777" stroke-width="0.5"/>
<rect x="721" y="38.8" width="6" height="3" fill="#3a96dd"/><path d="M728 37.8l5 5 M733 37.8l-5 5" stroke="#ee5a4a" stroke-width="0.8"/>
<path d="M724.75 59.77 L726.00 61.02 L727.25 59.77" fill="none" stroke="#666" stroke-width="0.7"/>
<rect x="739" y="35.6" width="12.8" height="9.8" fill="#fafafa" stroke="#666" stroke-width="0.6"/><path d="M743.27 35.6v9.8 M747.53 35.6v9.8 M739 38.87h12.8 M739 42.13h12.8" stroke="#777" stroke-width="0.5"/>
<rect x="743" y="38.8" width="5" height="3.2" fill="#3a96dd"/><path d="M741.5 33.6h8" stroke="#3a96dd" stroke-width="0.6"/>
<path d="M744.35 59.77 L745.60 61.02 L746.85 59.77" fill="none" stroke="#666" stroke-width="0.7"/>
<path d="M770.6 34.4v-1.2h-5.4l3 3.4l-3 3.4h5.4v-1.2" fill="none" stroke="#555" stroke-width="0.7"/>
<path d="M820.55 36.38 L821.80 37.62 L823.05 36.38" fill="none" stroke="#666" stroke-width="0.7"/>
<rect x="764.6" y="44.2" width="7.2" height="6.6" fill="#fafafa" stroke="#555" stroke-width="0.7"/><path d="M768.2 45.4v3.8 M766.8 47.8l1.4 1.4l1.4-1.4" fill="none" stroke="#2b88d8" stroke-width="0.7"/>
<path d="M792.75 47.38 L794.00 48.62 L795.25 47.38" fill="none" stroke="#666" stroke-width="0.7"/>
<g transform="rotate(-35 768.2 58)"><rect x="764.4" y="56" width="7.6" height="4" rx="0.9" fill="#f8f8f8" stroke="#b146c2" stroke-width="0.8"/><rect x="764.4" y="56" width="3" height="4" rx="0.9" fill="#b146c2"/></g>
<path d="M791.45 57.77 L792.70 59.02 L793.95 57.77" fill="none" stroke="#666" stroke-width="0.7"/>
<path d="M839.2 37.4h7.4l-2.9 3.3v3.6l-1.6-0.9v-2.7z" fill="#f8f8f8" stroke="#555" stroke-width="0.7"/>
<path d="M847.15 60.17 L848.40 61.42 L849.65 60.17" fill="none" stroke="#666" stroke-width="0.7"/>
<circle cx="866.2" cy="38.2" r="4.6" fill="none" stroke="#555" stroke-width="0.7"/><path d="M863 41.6l-5.4 5.2" stroke="#555" stroke-width="0.8"/>
<path d="M870.95 60.17 L872.20 61.42 L873.45 60.17" fill="none" stroke="#666" stroke-width="0.7"/>
<path d="M891.8 72.8l2.2-2.2l2.2 2.2" fill="none" stroke="#444" stroke-width="0.8"/>
<path d="M44.20 85.65 L46.80 85.65 L45.50 86.95 Z" fill="#555"/>
<circle cx="57" cy="84.6" r="0.3" fill="#999"/>
<circle cx="57" cy="86.2" r="0.3" fill="#999"/>
<circle cx="57" cy="87.8" r="0.3" fill="#999"/>
<path d="M71 84.6l3 3 M74 84.6l-3 3" stroke="#bbb" stroke-width="0.6"/><path d="M88 86.4l1.4 1.4l3-3.4" stroke="#bbb" stroke-width="0.6" fill="none"/>
<path d="M892.70 85.75 L893.80 86.85 L894.90 85.75" fill="none" stroke="#555" stroke-width="0.7"/>
<path d="M10.2 98.8v5.6h-5.6z" fill="#b8b8b8"/>
<path d="M41.90 106.15V463.5 M71.90 106.15V463.5 M101.90 106.15V463.5 M131.90 106.15V463.5 M161.90 106.15V463.5 M191.90 106.15V463.5 M221.90 106.15V463.5 M251.90 106.15V463.5 M281.90 106.15V463.5 M311.90 106.15V463.5 M341.90 106.15V463.5 M371.90 106.15V463.5 M401.90 106.15V463.5 M431.90 106.15V463.5 M461.90 106.15V463.5 M491.90 106.15V463.5 M521.90 106.15V463.5 M551.90 106.15V463.5 M581.90 106.15V463.5 M611.90 106.15V463.5 M641.90 106.15V463.5 M671.90 106.15V463.5 M701.90 106.15V463.5 M731.90 106.15V463.5 M761.90 106.15V463.5 M791.90 106.15V463.5 M821.90 106.15V463.5 M851.90 106.15V463.5 M881.90 106.15V463.5" stroke="#eeeeee" stroke-width="0.5" fill="none"/>
<path d="M11.9 115.52H889.4 M11.9 124.88H889.4 M11.9 134.25H889.4 M11.9 143.61H889.4 M11.9 152.98H889.4 M11.9 162.34H889.4 M11.9 171.71H889.4 M11.9 181.07H889.4 M11.9 190.44H889.4 M11.9 199.80H889.4 M11.9 209.17H889.4 M11.9 218.53H889.4 M11.9 227.90H889.4 M11.9 237.26H889.4 M11.9 246.62H889.4 M11.9 255.99H889.4 M11.9 265.36H889.4 M11.9 274.72H889.4 M11.9 284.09H889.4 M11.9 293.45H889.4 M11.9 302.81H889.4 M11.9 312.18H889.4 M11.9 321.55H889.4 M11.9 330.91H889.4 M11.9 340.27H889.4 M11.9 349.64H889.4 M11.9 359.00H889.4 M11.9 368.37H889.4 M11.9 377.74H889.4 M11.9 387.10H889.4 M11.9 396.47H889.4 M11.9 405.83H889.4 M11.9 415.20H889.4 M11.9 424.56H889.4 M11.9 433.93H889.4 M11.9 443.29H889.4 M11.9 452.65H889.4 M11.9 462.02H889.4" stroke="#e4e4e4" stroke-width="0.5" stroke-dasharray="1.6 0.8" fill="none"/>
<rect x="71.2" y="142.71" width="2.2" height="2.2" fill="#217346" stroke="#f8f8f8" stroke-width="0.4"/>
<path d="M894.10 99.95 L895.90 99.95 L895.00 100.85 Z" fill="#666"/>
<path d="M894 101l1-1.1l1 1.1z" fill="#666"/>
<path d="M893.90 460.65 L896.10 460.65 L895.00 461.75 Z" fill="#555"/>
<path d="M14.6 469l-1.3 1.2l1.3 1.2z M26.6 469l1.3 1.2l-1.3 1.2z" fill="#c2c2c2"/>
<circle cx="91" cy="470.2" r="3.5" fill="none" stroke="#777" stroke-width="0.6"/><path d="M89.2 470.2h3.6 M91 468.4v3.6" stroke="#777" stroke-width="0.6"/>
<circle cx="540.2" cy="468.8" r="0.3" fill="#999"/>
<circle cx="540.2" cy="470.4" r="0.3" fill="#999"/>
<circle cx="540.2" cy="472" r="0.3" fill="#999"/>
<path d="M552 469.3l-1.3 1.2l1.3 1.2z" fill="#666"/>
<path d="M886.4 469.3l1.3 1.2l-1.3 1.2z" fill="#555"/>
<rect x="38.6" y="480" width="6" height="4.8" fill="#ddd" stroke="#666" stroke-width="0.6"/><path d="M38.6 481.6h6 M40.6 480v4.8" stroke="#666" stroke-width="0.4"/><circle cx="43.4" cy="484" r="1.1" fill="#888"/>
<path d="M765.4 479.4h6.6v6h-6.6z M767.6 479.4v6 M769.8 479.4v6 M765.4 481.4h6.6 M765.4 483.4h6.6" fill="none" stroke="#555" stroke-width="0.6"/>
<rect x="784.2" y="479.6" width="6.4" height="5.6" fill="none" stroke="#666" stroke-width="0.6"/><rect x="786" y="480.6" width="2.8" height="3.6" fill="#aaa"/>
<rect x="803.2" y="479.6" width="6.4" height="5.6" fill="none" stroke="#666" stroke-width="0.6"/><path d="M803.2 482.2h4.2v-2.6" stroke="#666" stroke-width="0.5" fill="none"/>
<path d="M818.6 482.4h3" stroke="#777" stroke-width="0.6"/><path d="M825 482.4h46" stroke="#c8a8a0" stroke-width="0.4"/><rect x="847.3" y="480" width="1.7" height="4.8" fill="#666"/><path d="M874.6 482.4h3 M876.1 480.9v3" stroke="#777" stroke-width="0.6"/>
<path d="M7.2 493.4h3.6v3.4h-3.6z M11.5 493.4h3.6v3.4h-3.6z M7.2 497.5h3.6v3.4h-3.6z M11.5 497.5h3.6v3.4h-3.6z" fill="#f0f0f0"/>
<circle cx="33.2" cy="495.6" r="2.4" fill="none" stroke="#444" stroke-width="0.7"/><path d="M31.4 497.5l-2.8 2.9" stroke="#444" stroke-width="0.8"/>
<path d="M191.4 493.6h5.6v6.6h-5.6z M198.4 494.8v4.2 M191.4 492.6h0" fill="none" stroke="#e8e8e8" stroke-width="0.7"/><path d="M197 496h1.4" stroke="#e8e8e8" stroke-width="0.5"/>
<path d="M213.8 493h4l1 1.2h5.2v6.4h-10.2z" fill="#f4c542"/><rect x="213.8" y="495.6" width="10.2" height="5" fill="#fbd968"/><rect x="216.4" y="497.4" width="5" height="3.2" fill="#3a8fdc"/><rect x="217.8" y="498.8" width="2.2" height="1.8" fill="#f4c542"/>
<circle cx="242" cy="496.5" r="5.4" fill="#1b7fd0"/><path d="M237 495.4c1-3.6 5.4-5 8.4-2.6c1.6 1.3 2.2 3 1.8 4.6h-6.2c-0.4-1.6 0.8-2.4 1.6-2.4c-2.6-1-4.8 0-5.6 0.4z" fill="#4ccf7a"/><path d="M241.6 497.4c0 2 2.4 3 5.6 1.6l0.6-2z" fill="#1c2a3f"/><path d="M238 499.8c1.6 2.4 5 2.6 7 1.4c-2.6 0.2-5-1-5.4-3.4z" fill="#0d5ea8"/>
<circle cx="264.7" cy="496.5" r="5.4" fill="#e33b2e"/><path d="M264.7 496.5l-4.7-2.7a5.4 5.4 0 0 0 2 7.4z" fill="#2da94f"/><path d="M264.7 496.5l-2.7 4.7a5.4 5.4 0 0 0 8.1-4.7z" fill="#fbc116"/><circle cx="264.7" cy="496.5" r="2.5" fill="#f4f4f4"/><circle cx="264.7" cy="496.5" r="1.9" fill="#4285f4"/>
<rect x="286" y="492.2" width="7.4" height="8.6" rx="0.6" fill="#1490df"/><rect x="289" y="496.4" width="4.4" height="4.4" fill="#0f5fb4"/><rect x="282" y="494" width="6.4" height="6.4" rx="0.6" fill="#0f6cbd"/><circle cx="285.2" cy="497.2" r="1.6" fill="none" stroke="#fff" stroke-width="0.8"/>
<rect x="307.6" y="491.6" width="7.8" height="9.4" rx="0.6" fill="#21a366"/><rect x="311.4" y="496.2" width="4" height="4.8" fill="#107c41"/><rect x="304" y="493.6" width="6.4" height="6.4" rx="0.6" fill="#107c41"/>
<rect x="380" y="491.4" width="11" height="10.2" rx="0.8" fill="#ea4f2c"/><path d="M389.2 493.4h-5.2c-1.6 0-1.6 0.6-1.6 1.6v3c0 1 0 1.6 1.6 1.6h5.2" fill="none" stroke="#fff" stroke-width="1.1"/>
<path d="M799.8 497.6l2.2-2.2l2.2 2.2" fill="none" stroke="#eee" stroke-width="0.7"/>
<rect x="811.6" y="492.6" width="2.8" height="5.4" rx="1.4" fill="#eee"/><path d="M810.4 496.6c0 3.6 5.2 3.6 5.2 0 M813 499.4v1.4" fill="none" stroke="#eee" stroke-width="0.6"/>
<rect x="822" y="493.8" width="6" height="4.4" fill="none" stroke="#eee" stroke-width="0.7"/><path d="M823.6 500h3 M821.4 496v4h1.6" stroke="#eee" stroke-width="0.6" fill="none"/>
<path d="M832.6 495.6h1.4l1.8-1.6v6l-1.8-1.6h-1.4z" fill="none" stroke="#eee" stroke-width="0.6"/><path d="M837.4 495.2c0.8 0.8 0.8 2.8 0 3.6 M838.8 494.2c1.4 1.4 1.4 4.4 0 5.8" fill="none" stroke="#eee" stroke-width="0.5"/>
<path d="M881.2 493.6h7.6v5.4h-2.8l-1 1.6l-1-1.6h-2.8z" fill="none" stroke="#eee" stroke-width="0.7"/></svg>
<svg width="900" height="506" viewBox="0 0 900 506" style="z-index:8"><circle cx="353.7" cy="55.5" r="3.7" fill="#f8f8f8" stroke="#3a96dd" stroke-width="0.7"/><path d="M353.7 53.5v2.2h1.7" fill="none" stroke="#555" stroke-width="0.5"/>
<rect x="349.4" y="99.30" width="13.2" height="8.2" fill="#f4f4f4" stroke="#555" stroke-width="0.7"/><circle cx="356" cy="103.40" r="2.8" fill="#f8f8f8" stroke="#555" stroke-width="0.7"/><path d="M350.8 100.90v5 M361.2 100.90v5" stroke="#555" stroke-width="0.5"/>
<rect x="357" y="104.30" width="6.6" height="7" rx="1.6" fill="#f7a04a" stroke="#ef8a2e" stroke-width="0.6"/><path d="M357 106.70c2 1.2 4.6 1.2 6.6 0 M357 108.70c2 1.2 4.6 1.2 6.6 0" fill="none" stroke="#fbd2a6" stroke-width="0.6"/>
<path d="M376 98.2v7.4l1.8-1.6l1.3 2.8l1.1-0.5l-1.3-2.7h2.4z" fill="#fff" stroke="#222" stroke-width="0.5"/>
<rect x="351.2" y="119.00" width="8.6" height="13.6" fill="#f8f8f8" stroke="#555" stroke-width="0.7"/><rect x="352.4" y="120.40" width="6.2" height="2.4" fill="none" stroke="#777" stroke-width="0.5"/>
<rect x="352.60" y="124.40" width="1.1" height="1.1" fill="#444"/>
<rect x="354.80" y="124.40" width="1.1" height="1.1" fill="#444"/>
<rect x="357.00" y="124.40" width="1.1" height="1.1" fill="#444"/>
<rect x="352.60" y="126.80" width="1.1" height="1.1" fill="#444"/>
<rect x="354.80" y="126.80" width="1.1" height="1.1" fill="#444"/>
<rect x="357.00" y="126.80" width="1.1" height="1.1" fill="#444"/>
<rect x="352.60" y="129.20" width="1.1" height="1.1" fill="#444"/>
<rect x="354.80" y="129.20" width="1.1" height="1.1" fill="#444"/>
<rect x="357.00" y="129.20" width="1.1" height="1.1" fill="#444"/>
<rect x="357" y="127.00" width="6.6" height="7" rx="1.6" fill="#f7a04a" stroke="#ef8a2e" stroke-width="0.6"/><path d="M357 129.40c2 1.2 4.6 1.2 6.6 0 M357 131.40c2 1.2 4.6 1.2 6.6 0" fill="none" stroke="#fbd2a6" stroke-width="0.6"/>
<rect x="349.4" y="143.10" width="13.2" height="11.6" fill="#f8f8f8" stroke="#555" stroke-width="0.7"/><path d="M349.4 145.90h13.2 M352.2 141.50v2.6 M359.8 141.50v2.6" stroke="#555" stroke-width="0.6"/><rect x="353.4" y="149.10" width="1.2" height="1.0" fill="#777"/>
<rect x="349.4" y="165.60" width="13.2" height="11.6" fill="#f8f8f8" stroke="#555" stroke-width="0.7"/><path d="M349.4 168.40h13.2 M352.2 164.00v2.6 M359.8 164.00v2.6" stroke="#555" stroke-width="0.6"/><rect x="353.4" y="171.60" width="1.7999999999999998" height="0.6" fill="#777"/>
<circle cx="356" cy="193.50" r="6.4" fill="#f8f8f8" stroke="#555" stroke-width="0.7"/><path d="M356 189.70v4.2h3.2" fill="none" stroke="#555" stroke-width="0.7"/>
<path d="M352.6 244.30l6.4-11" stroke="#555" stroke-width="0.6"/></svg>
</body></html>
